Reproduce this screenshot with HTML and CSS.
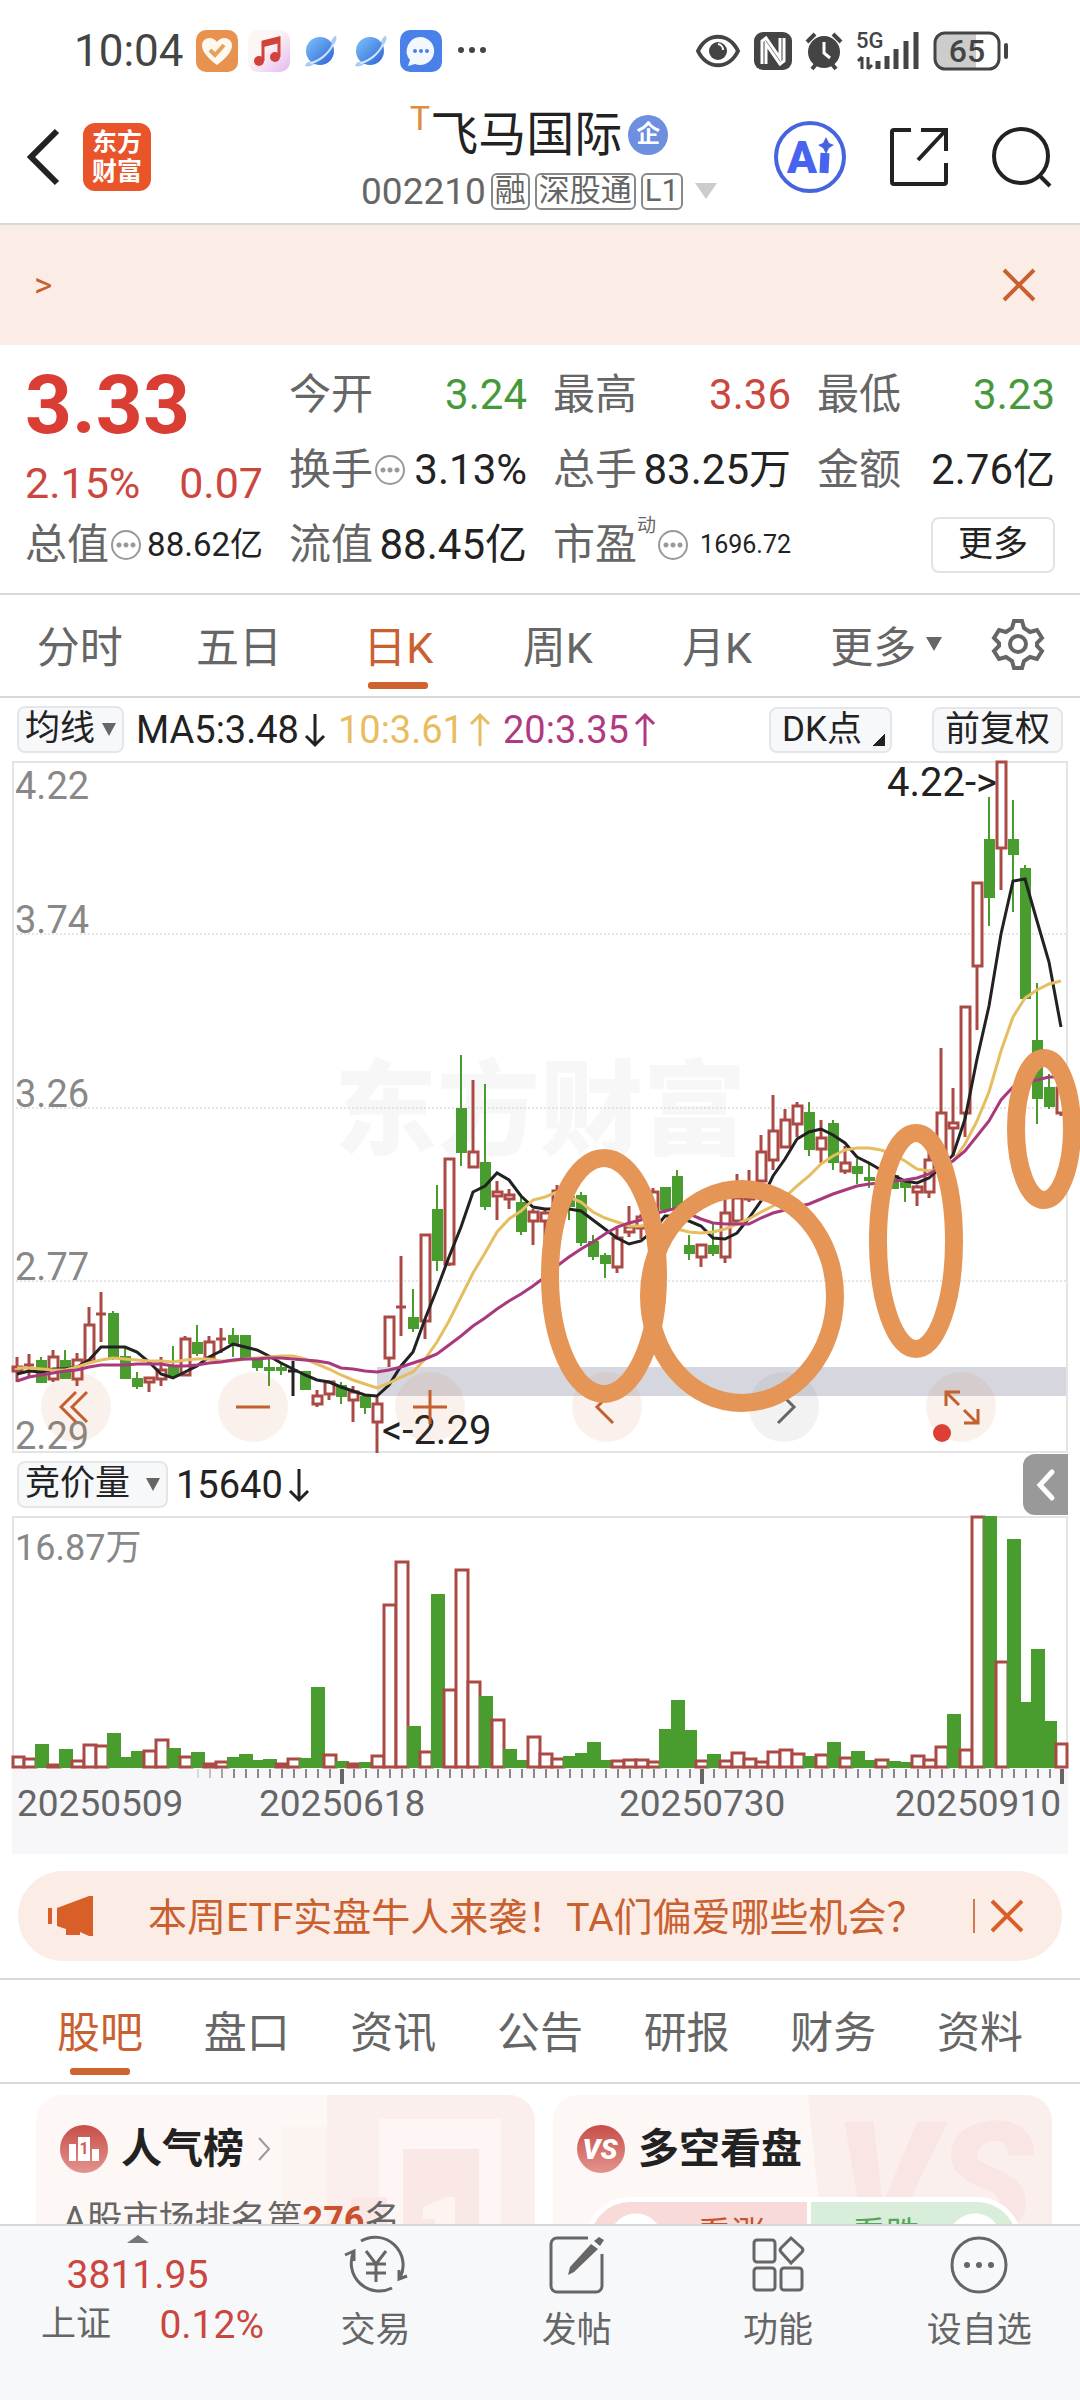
FILE: index.html
```html
<!DOCTYPE html>
<html lang="zh-CN">
<head>
  <meta charset="UTF-8" />
  <meta name="viewport" content="width=device-width, initial-scale=1.0" />
  <title>飞马国际 002210</title>
  <link rel="stylesheet" href="styles.css">
</head>
<body>

  <div class="status-bar">
    <span class="clock">10:04</span>
    <div class="status-apps">
      <svg width="42" height="42" viewBox="0 0 42 42">
        <rect width="42" height="42" rx="10" fill="#e89250"/>
        <path d="M21 35C12 28 6 22 6 15.500C6 8 16 5 21 12C26 5 36 8 36 15.500C36 22 30 28 21 35Z" fill="#fff8ee"/>
        <path d="M14 20l5 5 9-10" fill="none" stroke="#e3a25d" stroke-width="4"/>
      </svg>
      <svg width="42" height="42" viewBox="0 0 42 42">
        <defs>
          <linearGradient id="music" x1="0" y1="0" x2="1" y2="1"><stop offset="0.4" stop-color="#fdf6f4"/><stop offset="1" stop-color="#e5b8f0"/></linearGradient>
          <linearGradient id="planet" x1="0" y1="0" x2="1" y2="1"><stop offset="0" stop-color="#7cc4f7"/><stop offset="1" stop-color="#2f62d8"/></linearGradient>
        </defs>
        <rect width="42" height="42" rx="10" fill="url(#music)"/>
        <path d="M15 31V12l16-4v19" fill="none" stroke="#d2413a" stroke-width="3"/>
        <path d="M15 15l16-4" stroke="#d2413a" stroke-width="4"/>
        <circle cx="11" cy="31" r="5" fill="#d2413a"/><circle cx="27" cy="27" r="5" fill="#d2413a"/>
      </svg>
      <svg width="40" height="42" viewBox="0 0 40 42">
        <path d="M34 7c4 4-22 31-28 27" fill="none" stroke="#a8cdf5" stroke-width="4"/>
        <circle cx="20" cy="21" r="14" fill="url(#planet)"/>
        <path d="M33 14C29 24 18 32 10 33" fill="none" stroke="#d4e6fb" stroke-width="2"/>
      </svg>
      <svg width="40" height="42" viewBox="0 0 40 42">
        <path d="M34 7c4 4-22 31-28 27" fill="none" stroke="#a8cdf5" stroke-width="4"/>
        <circle cx="20" cy="21" r="14" fill="url(#planet)"/>
        <path d="M33 14C29 24 18 32 10 33" fill="none" stroke="#d4e6fb" stroke-width="2"/>
      </svg>
      <svg width="42" height="42" viewBox="0 0 42 42">
        <rect width="42" height="42" rx="10" fill="#4a80ea"/>
        <path d="M21 7a14 14 0 1 1-6 27l-7 2 2-6A14 14 0 0 1 21 7Z" fill="#f3f8ff"/>
        <circle cx="15" cy="21" r="2" fill="#4a80ea"/><circle cx="21" cy="21" r="2" fill="#4a80ea"/><circle cx="27" cy="21" r="2" fill="#4a80ea"/>
      </svg>
      <svg class="more-apps" width="30" height="42" viewBox="0 0 30 42" fill="#444"><circle cx="4" cy="20" r="3"/><circle cx="15" cy="20" r="3"/><circle cx="26" cy="20" r="3"/></svg>
    </div>
    <div class="status-icons">
      <svg width="46" height="38" viewBox="0 0 46 38">
        <path d="M3 19C12 0 34 0 43 19C34 38 12 38 3 19Z" fill="none" stroke="#444" stroke-width="4"/>
        <circle cx="23" cy="19" r="9" fill="#444"/><path d="M23 12a6 6 0 0 1 5 6" fill="none" stroke="#fff" stroke-width="2"/>
      </svg>
      <svg width="38" height="38" viewBox="0 0 38 38">
        <rect width="38" height="38" rx="9" fill="#444"/>
        <path d="M8 32V9l4-3 14 20V6M30 6v23l-4 3L12 12v20" fill="none" stroke="#fff" stroke-width="3"/>
      </svg>
      <svg width="38" height="40" viewBox="0 0 38 40">
        <circle cx="19" cy="21" r="16" fill="#444"/>
        <path d="M2 11l8-8M36 11l-8-8M7 38l5-6M31 38l-5-6" stroke="#444" stroke-width="4"/>
        <path d="M19 11v11l6 5" fill="none" stroke="#fff" stroke-width="3"/>
      </svg>
      <svg width="64" height="40" viewBox="0 0 64 40">
        <text x="0" y="17" class="net">5G</text>
        <path d="M6 26v12M2 30l4-4M12 26v12M16 34l-4 4" stroke="#444" stroke-width="3" fill="none"/>
        <path d="M22 30v8M31 25v13M40 18v20M50 10v28M60 1v37" stroke="#444" stroke-width="5"/>
      </svg>
      <svg width="76" height="40" viewBox="0 0 76 40">
        <path d="M12 2h31v36H12A10 10 0 0 1 2 28V12A10 10 0 0 1 12 2Z" fill="#ccc"/>
        <rect x="2" y="2" width="64" height="36" rx="10" fill="none" stroke="#444" stroke-width="3"/>
        <path d="M73 14v12" stroke="#444" stroke-width="4" stroke-linecap="round"/>
        <text x="34" y="31" text-anchor="middle" class="battery">65</text>
      </svg>
    </div>
  </div>

  <header class="header">
    <div class="header-side">
      <button class="icon-btn" aria-label="返回">
        <svg width="34" height="58" viewBox="0 0 34 58"><path d="M31 3L5 29l26 26" fill="none" stroke="#222" stroke-width="6"/></svg>
      </button>
      <div class="logo"><span>东方</span><span>财富</span></div>
    </div>
    <div class="stock">
      <h1 class="stock-name"><sup>T</sup>飞马国际<span class="badge">企</span></h1>
      <div class="stock-code">
        <span>002210</span><span class="tag">融</span><span class="tag">深股通</span><span class="tag">L1</span>
        <svg width="22" height="16" viewBox="0 0 22 16"><path d="M0 0h22L11 16Z" fill="#ccc"/></svg>
      </div>
    </div>
    <div class="header-side header-actions">
      <button class="icon-btn" aria-label="AI">
        <svg width="72" height="72" viewBox="0 0 72 72">
          <circle cx="36" cy="36" r="34" fill="none" stroke="#4664e0" stroke-width="4"/>
          <text x="13" y="52" class="ai">A</text>
          <path d="M51 32l-1 20" stroke="#4664f0" stroke-width="9"/>
          <path d="M52 16l3 6 5 2-5 3-3 6-3-6-5-3 5-2Z" fill="#4664e0"/>
        </svg>
      </button>
      <button class="icon-btn" aria-label="分享">
        <svg width="60" height="60" viewBox="0 0 60 60" fill="none" stroke="#222" stroke-width="4">
          <path d="M22 3H5a2 2 0 0 0-2 2v50a2 2 0 0 0 2 2h50a2 2 0 0 0 2-2V36M32 3h25v21M57 3L29 33"/>
        </svg>
      </button>
      <button class="icon-btn" aria-label="搜索">
        <svg width="60" height="62" viewBox="0 0 60 62" fill="none" stroke="#222" stroke-width="4"><circle cx="29" cy="30" r="27"/><path d="M47 49l11 11"/></svg>
      </button>
    </div>
  </header>

  <div class="banner">
    <a href="#" class="banner-link">&gt;</a>
    <button class="icon-btn" aria-label="关闭">
      <svg width="34" height="34" viewBox="0 0 34 34"><path d="M2 2l30 30M32 2L2 32" stroke="#c9602f" stroke-width="4"/></svg>
    </button>
  </div>

  <main class="main">
    <section class="quote">
      <div class="price">
        <strong>3.33</strong>
        <div class="change"><span>2.15%</span><span>0.07</span></div>
      </div>
      <div class="cell"><span>今开</span><b class="down">3.24</b></div>
      <div class="cell"><span>最高</span><b class="up">3.36</b></div>
      <div class="cell"><span>最低</span><b class="down">3.23</b></div>
      <div class="cell"><span>换手</span><i class="hint"></i><b>3.13%</b></div>
      <div class="cell"><span>总手</span><b>83.25万</b></div>
      <div class="cell"><span>金额</span><b>2.76亿</b></div>
      <div class="cell"><span>总值</span><i class="hint"></i><b class="small">88.62亿</b></div>
      <div class="cell"><span>流值</span><b>88.45亿</b></div>
      <div class="cell"><span>市盈</span><sup>动</sup><i class="hint"></i><b class="tiny">1696.72</b></div>
      <div class="cell"><button class="more-btn">更多</button></div>
    </section>

    <nav class="period-tabs">
      <button>分时</button>
      <button>五日</button>
      <button class="active">日K</button>
      <button>周K</button>
      <button>月K</button>
      <button class="more-tab">更多<svg width="16" height="14" viewBox="0 0 16 14"><path d="M0 0h16L8 14Z" fill="#666"/></svg></button>
      <button aria-label="设置">
        <svg width="52" height="52" viewBox="0 0 52 52" fill="none" stroke="#666" stroke-width="4">
          <path d="M22 3h8l2 7 6 4 7-2 5 8-5 5v3l5 5-5 8-7-2-6 4-2 7h-8l-2-7-6-4-7 2-5-8 5-5v-3l-5-5 5-8 7 2 6-4Z"/><circle cx="26" cy="26" r="8"/>
        </svg>
      </button>
    </nav>

    <div class="chart-bar">
      <label class="dropdown"><select aria-label="指标"><option>均线</option></select></label>
      <span class="ma ma5">MA5:3.48<svg width="22" height="34" viewBox="0 0 22 34"><path d="M11 1v31M2 23l9 9 9-9"/></svg></span>
      <span class="ma ma10">10:3.61<svg width="22" height="34" viewBox="0 0 22 34"><path d="M11 33V2M2 11l9-9 9 9"/></svg></span>
      <span class="ma ma20">20:3.35<svg width="22" height="34" viewBox="0 0 22 34"><path d="M11 33V2M2 11l9-9 9 9"/></svg></span>
      <div class="chart-tools">
        <button class="chip dk">DK点</button>
        <button class="chip">前复权</button>
      </div>
    </div>

    <div class="chart">
      <svg class="plot" viewBox="0 0 1056 692">
        <text x="322" y="386" class="watermark">东方财富</text>
        <path d="M0 173H1056M0 347H1056M0 520H1056" class="grid"/>
        <rect x="365" y="606" width="690" height="29" fill="#d6d7de"/>
        <rect x="1" y="1" width="1054" height="690" class="frame"/>
        <g class="axis-text">
          <text x="3" y="38">4.22</text>
          <text x="3" y="172">3.74</text>
          <text x="3" y="346">3.26</text>
          <text x="3" y="519">2.77</text>
          <text x="3" y="688">2.29</text>
        </g>
        <g id="candles"></g>
        <g id="averages"></g>
        <text x="985" y="35" text-anchor="end" class="mark">4.22-&gt;</text>
        <text x="370" y="683" class="mark">&lt;-2.29</text>
      </svg>
      <div class="chart-controls">
        <button aria-label="最左"><svg width="70" height="70" viewBox="0 0 70 70"><path d="M35 20L20 35l15 15M46 20L31 35l15 15"/></svg></button>
        <button aria-label="缩小"><svg width="70" height="70" viewBox="0 0 70 70"><path d="M18 35h34"/></svg></button>
        <button aria-label="放大"><svg width="70" height="70" viewBox="0 0 70 70"><path d="M18 35h34M35 18v34"/></svg></button>
        <button aria-label="左移"><svg width="70" height="70" viewBox="0 0 70 70"><path d="M41 19L25 35l16 16"/></svg></button>
        <button aria-label="右移" class="disabled"><svg width="70" height="70" viewBox="0 0 70 70"><path d="M29 19l16 16-16 16"/></svg></button>
        <button aria-label="全屏"><svg width="70" height="70" viewBox="0 0 70 70"><path d="M20 34V20h14M20 20l13 13M52 37v14H38M51 51L38 38"/><circle cx="16" cy="61" r="9" class="dot"/></svg></button>
      </div>
      <svg class="plot circles" viewBox="0 0 1056 692">
        <ellipse cx="592" cy="515" rx="54" ry="118"/>
        <ellipse cx="730" cy="535" rx="93" ry="107"/>
        <ellipse cx="904" cy="480" rx="38" ry="108"/>
        <ellipse cx="1032" cy="368" rx="28" ry="71"/>
      </svg>
    </div>

    <div class="chart-bar volume-bar">
      <label class="dropdown wide"><select aria-label="副图"><option>竞价量</option></select></label>
      <span class="ma ma5">15640<svg width="22" height="34" viewBox="0 0 22 34"><path d="M11 1v31M2 23l9 9 9-9"/></svg></span>
      <button class="drawer" aria-label="展开"><svg width="20" height="32" viewBox="0 0 20 32"><path d="M16 3L4 16l12 13" fill="none" stroke="#fff" stroke-width="5" stroke-linecap="round"/></svg></button>
    </div>

    <div class="chart">
      <svg class="plot" viewBox="0 0 1056 338">
        <path d="M1 252V1h1054v251" class="frame"/>
        <rect y="252" width="1056" height="86" fill="#f7f7fa"/>
        <text x="3" y="44" class="axis-text volume-max">16.87万</text>
        <g id="volumes"></g>
        <g id="ticks"></g>
        <g class="dates">
          <text x="5" y="300">20250509</text>
          <text x="247" y="300">20250618</text>
          <text x="607" y="300">20250730</text>
          <text x="1049" y="300" text-anchor="end">20250910</text>
        </g>
      </svg>
    </div>

    <div class="notice">
      <svg width="46" height="40" viewBox="0 0 46 40" fill="#d95f28"><path d="M0 12h4v16H0ZM9 12L41 0h4v40h-4l-9-4v3H18v-6l-9-3Z"/></svg>
      <a href="#">本周ETF实盘牛人来袭！TA们偏爱哪些机会？</a>
      <button class="icon-btn" aria-label="关闭">
        <svg width="34" height="34" viewBox="0 0 34 34"><path d="M2 2l30 30M32 2L2 32" stroke="#d95f28" stroke-width="4"/></svg>
      </button>
    </div>

    <nav class="info-tabs">
      <button class="active">股吧</button>
      <button>盘口</button>
      <button>资讯</button>
      <button>公告</button>
      <button>研报</button>
      <button>财务</button>
      <button>资料</button>
    </nav>

    <section class="cards">
      <article class="card">
        <svg class="card-art" width="300" height="200" viewBox="0 0 300 200">
          <path d="M92 0h208v200H92Z" fill="#fbefed"/>
          <path d="M46 32h46v168H46Z" fill="#fcf4f1"/>
          <path d="M144 24h122v176H144Z" fill="#fdf6f4"/>
          <path d="M168 54h76v146h-76ZM116 102h36v98h-36Z" fill="#fae8e6"/>
          <path d="M188 112l24-10h8v98h-20v-76h-12Z" fill="#fdf4f2"/>
        </svg>
        <h2>
          <svg width="48" height="48" viewBox="0 0 48 48">
            <defs><linearGradient id="ball" x1="0" y1="0" x2="0" y2="1"><stop offset="0" stop-color="#c74e49"/><stop offset="1" stop-color="#e3948d"/></linearGradient></defs>
            <circle cx="24" cy="24" r="24" fill="url(#ball)"/>
            <path d="M9 19h7v17H9ZM18 12h12v24H18ZM32 24h7v12h-7Z" fill="#fff"/>
            <text x="24" y="29" text-anchor="middle" class="rank-one">1</text>
          </svg>
          人气榜
          <svg width="14" height="24" viewBox="0 0 14 24"><path d="M2 1l10 11L2 23" fill="none" stroke="#999" stroke-width="2"/></svg>
        </h2>
        <p>A股市场排名第<em>276</em>名</p>
      </article>
      <article class="card">
        <svg class="card-art" width="300" height="200" viewBox="0 0 300 200">
          <path d="M56 0h244v200H76Z" fill="#fbefed"/>
          <text x="82" y="140" class="vs-art">VS</text>
        </svg>
        <h2>
          <svg width="48" height="48" viewBox="0 0 48 48"><circle cx="24" cy="24" r="24" fill="url(#ball)"/><text x="23" y="34" text-anchor="middle" class="vs">VS</text></svg>
          多空看盘
        </h2>
        <div class="vote">
          <button class="bull">看涨</button>
          <button class="bear">看跌</button>
        </div>
      </article>
    </section>
  </main>

  <footer class="bottom-nav">
    <a href="#" class="index">
      <svg width="22" height="8" viewBox="0 0 22 8"><path d="M11 0l11 8H0Z" fill="#777"/></svg>
      <span class="up">3811.95</span>
      <span class="index-row"><span>上证</span><span class="up pct">0.12%</span></span>
    </a>
    <a href="#">
      <svg width="66" height="60" viewBox="0 0 66 60" fill="none" stroke="#666" stroke-width="3">
        <path d="M18 6A28 28 0 0 1 57 43M49 53A28 28 0 0 1 11 16M2 20l9-4v10M64 41l-8 3v-9"/>
        <path d="M23 16l10 13 10-13M33 29v18M23 29h20M23 38h20"/>
      </svg>
      交易
    </a>
    <a href="#">
      <svg width="58" height="60" viewBox="0 0 58 60">
        <path d="M40 3H9a6 6 0 0 0-6 6v42a6 6 0 0 0 6 6h39a6 6 0 0 0 6-6V19" fill="none" stroke="#666" stroke-width="3"/>
        <path d="M43 9l7 5-24 23-6 3 2-8ZM46 6l5-4 5 3-4 6Z" fill="#666"/>
      </svg>
      发帖
    </a>
    <a href="#">
      <svg width="56" height="60" viewBox="0 0 56 60" fill="none" stroke="#666" stroke-width="3">
        <rect x="4" y="5" width="21" height="22" rx="3"/><rect x="4" y="33" width="21" height="22" rx="3"/><rect x="31" y="33" width="21" height="22" rx="3"/>
        <path d="M41 3l11 10a3 3 0 0 1 0 4L41 28 31 17a3 3 0 0 1 0-4Z"/>
      </svg>
      功能
    </a>
    <a href="#">
      <svg width="60" height="60" viewBox="0 0 60 60"><circle cx="30" cy="30" r="27" fill="none" stroke="#666" stroke-width="3"/><g fill="#666"><circle cx="18" cy="30" r="3"/><circle cx="30" cy="30" r="3"/><circle cx="42" cy="30" r="3"/></g></svg>
      设自选
    </a>
  </footer>

  <script src="script.js"></script>
</body>
</html>
```

FILE: styles.css
```css
* {
  box-sizing: border-box;
}

body {
  margin: 0;
  height: 100vh;
  display: flex;
  flex-direction: column;
  overflow: hidden;
  background: #fff;
  color: #222;
  font-family: Roboto, "Noto Sans CJK SC", sans-serif;
}

button {
  margin: 0;
  padding: 0;
  border: none;
  background: none;
  color: inherit;
  font-family: inherit;
  cursor: pointer;
}

a {
  color: inherit;
  text-decoration: none;
}

svg {
  display: block;
  flex: none;
  overflow: visible;
}

.icon-btn {
  display: flex;
}

.up {
  color: #cc4640;
}

.down {
  color: #46993a;
}

/* status bar */
.status-bar {
  display: flex;
  align-items: center;
  height: 102px;
  padding: 0 71px 0 74px;
  color: #444;
}

.clock {
  font-size: 44px;
}

.status-apps {
  display: flex;
  align-items: center;
  gap: 10px;
  margin-left: 12px;
}

.more-apps {
  margin-left: 5px;
}

.status-icons {
  display: flex;
  align-items: center;
  gap: 13px;
  margin-left: auto;
}

.net {
  font-size: 22px;
  font-weight: 500;
  fill: #444;
}

.battery {
  font-size: 32px;
  font-weight: 500;
  fill: #444;
}

/* header */
.header {
  display: flex;
  justify-content: space-between;
  height: 123px;
  padding: 0 28px 0 26px;
  border-bottom: 2px solid #d8d8da;
}

.header-side {
  flex: 1;
  display: flex;
  align-items: center;
  gap: 23px;
  height: 110px;
}

.header-actions {
  justify-content: flex-end;
  gap: 43px;
}

.logo {
  display: flex;
  flex-direction: column;
  justify-content: center;
  width: 68px;
  height: 68px;
  border-radius: 12px;
  background: #e9542b;
  color: #fff;
  font-size: 25px;
  font-weight: 700;
  line-height: 29px;
  text-align: center;
}

.stock {
  padding-top: 4px;
}

.stock-name {
  display: flex;
  align-items: center;
  justify-content: center;
  margin: 0;
  font-size: 48px;
  font-weight: 400;
  line-height: 58px;
}

.stock-name sup {
  align-self: flex-start;
  color: #df8a3c;
  font-size: 34px;
  line-height: 24px;
}

.badge {
  width: 40px;
  height: 40px;
  margin-left: 6px;
  border-radius: 50%;
  background: #6e8fe0;
  color: #fff;
  font-size: 24px;
  font-weight: 700;
  line-height: 38px;
  text-align: center;
}

.stock-code {
  display: flex;
  align-items: center;
  gap: 5px;
  height: 54px;
  color: #666;
  font-size: 37px;
}

.tag {
  height: 37px;
  padding: 0 2px;
  border: 2px solid #888;
  border-radius: 6px;
  font-size: 31px;
  line-height: 32px;
}

.stock-code svg {
  margin-left: 7px;
}

.ai {
  font-size: 44px;
  font-weight: 900;
  fill: #4664f0;
}

/* banner */
.banner {
  display: flex;
  align-items: center;
  justify-content: space-between;
  height: 120px;
  padding: 0 44px 0 34px;
  background: #fbede5;
  color: #c9602f;
}

.banner-link {
  font-size: 35px;
}

.main {
  flex: 1;
  min-height: 0;
  overflow: hidden;
}

/* quote */
.quote {
  display: grid;
  grid-template-columns: repeat(4, 1fr);
  grid-auto-rows: 75px;
  column-gap: 26px;
  padding: 12px 25px 11px;
  border-bottom: 2px solid #d8d8da;
}

.price {
  grid-row: span 2;
  color: #d93d33;
}

.price strong {
  display: block;
  font-size: 82px;
  font-weight: 700;
  line-height: 96px;
}

.change {
  display: flex;
  justify-content: space-between;
  color: #cc4640;
  font-size: 43px;
  line-height: 60px;
}

.cell {
  display: flex;
  align-items: center;
  color: #666;
  font-size: 42px;
  line-height: 60px;
  white-space: nowrap;
}

.cell b {
  margin-left: auto;
  color: #222;
  font-weight: 400;
}

.cell b.up {
  color: #cc4640;
}

.cell b.down {
  color: #46993a;
}

.cell b.small {
  font-size: 33px;
}

.cell b.tiny {
  font-size: 25px;
}

.cell sup {
  align-self: flex-start;
  font-size: 19px;
  line-height: 38px;
}

/* circle with three dots */
.hint {
  flex: none;
  width: 30px;
  height: 30px;
  margin-left: 2px;
  border: 2px solid #999;
  border-radius: 50%;
  background:
    radial-gradient(circle at 6px 13px, #999 2px, transparent 3px),
    radial-gradient(circle at 13px 13px, #999 2px, transparent 3px),
    radial-gradient(circle at 20px 13px, #999 2px, transparent 3px);
}

.more-btn {
  width: 124px;
  height: 56px;
  margin-left: auto;
  border: 2px solid #e2e3e8;
  border-radius: 8px;
  color: #222;
  font-size: 35px;
  line-height: 50px;
}

/* tabs */
.period-tabs,
.info-tabs {
  border-bottom: 2px solid #d8d8da;
}

.period-tabs {
  display: grid;
  grid-template-columns: repeat(6, 1fr) 124px;
  height: 103px;
}

.info-tabs {
  display: flex;
  justify-content: space-between;
  height: 106px;
  padding: 0 57px;
  border-top: 2px solid #d8d8da;
}

.period-tabs button,
.info-tabs button {
  display: flex;
  align-items: center;
  justify-content: center;
  position: relative;
  height: 100%;
  padding-bottom: 4px;
  color: #666;
  font-size: 43px;
}

.period-tabs .more-tab {
  gap: 10px;
  padding-left: 20px;
}

.period-tabs .active,
.info-tabs .active {
  color: #c9602f;
}

.period-tabs .active::after,
.info-tabs .active::after {
  content: "";
  position: absolute;
  bottom: 7px;
  left: 50%;
  width: 60px;
  height: 7px;
  margin-left: -30px;
  border-radius: 3px;
  background: #cf6330;
}

/* chart */
.chart-bar {
  display: flex;
  align-items: center;
  gap: 12px;
  height: 63px;
  margin: 0 12px;
  padding: 0 5px;
}

.dropdown {
  position: relative;
}

.dropdown select {
  display: block;
  width: 107px;
  height: 47px;
  padding: 0 6px 3px;
  appearance: none;
  border: 2px solid #e4e6ea;
  border-radius: 8px;
  background: #f7f8fa;
  color: #222;
  font-family: inherit;
  font-size: 35px;
}

.dropdown.wide select {
  width: 151px;
}

.dropdown::after {
  content: "";
  position: absolute;
  top: 17px;
  right: 8px;
  border: 7px solid transparent;
  border-top: 13px solid #666;
  border-bottom: none;
  pointer-events: none;
}

.ma {
  display: flex;
  align-items: center;
  gap: 5px;
  font-size: 38px;
}

.ma svg {
  fill: none;
  stroke: currentColor;
  stroke-width: 3;
}

.ma10 {
  color: #e8bd5f;
}

.ma20 {
  color: #b03a80;
}

.chart-tools {
  display: flex;
  gap: 40px;
  margin-left: auto;
}

.chip {
  height: 46px;
  padding: 0 11px;
  border: 2px solid #e4e6ea;
  border-radius: 8px;
  background: #f7f8fa;
  font-size: 35px;
  line-height: 38px;
}

.chip.dk {
  padding-right: 28px;
  background: linear-gradient(135deg, transparent 50%, #222 50%) right 5px bottom 5px / 12px 12px no-repeat #f7f8fa;
}

.volume-bar {
  gap: 8px;
  padding-right: 0;
}

.drawer {
  display: flex;
  align-items: center;
  justify-content: center;
  width: 45px;
  height: 61px;
  margin-left: auto;
  border-radius: 12px 0 0 12px;
  background: #999;
}

.chart {
  position: relative;
  margin: 0 12px;
}

.plot {
  width: 100%;
  height: auto;
}

.circles {
  position: absolute;
  top: 0;
  left: 0;
  pointer-events: none;
  fill: none;
  stroke: #e59556;
  stroke-width: 18;
}

.frame {
  fill: none;
  stroke: #e4e4e4;
  stroke-width: 2;
}

.grid {
  stroke: #ccc;
  stroke-width: 1;
  stroke-dasharray: 2 2;
}

.watermark {
  fill: #f7f7f7;
  font-size: 103px;
  font-weight: 900;
}

.axis-text {
  fill: #888;
  font-size: 38px;
}

.volume-max {
  font-size: 36px;
}

.mark {
  fill: #222;
  font-size: 40px;
}

.dates {
  fill: #666;
  font-size: 37px;
}

.rise {
  fill: #fff;
  stroke: #ab4a44;
  stroke-width: 3;
}

.fall {
  fill: #489d2e;
  stroke: #489d2e;
  stroke-width: 2;
}

.flat {
  stroke: #222;
  stroke-width: 3;
}

.line {
  fill: none;
  stroke-width: 3;
}

.tick {
  stroke: #888;
  stroke-width: 2;
}

.tick.major {
  stroke: #666;
  stroke-width: 4;
}

.chart-controls {
  position: absolute;
  right: 72px;
  bottom: 11px;
  left: 29px;
  display: flex;
  justify-content: space-between;
}

.chart-controls button {
  border-radius: 50%;
  background: rgba(207, 99, 48, 0.09);
}

.chart-controls button.disabled {
  background: rgba(90, 90, 90, 0.08);
}

.chart-controls svg {
  fill: none;
  stroke: #c3602f;
  stroke-width: 3;
}

.chart-controls .disabled svg {
  stroke: #666;
}

.chart-controls .dot {
  fill: #dc4034;
  stroke: none;
}

/* notice */
.notice {
  display: flex;
  align-items: center;
  height: 90px;
  margin: 17px 18px;
  padding: 0 38px 0 30px;
  border-radius: 45px;
  background: #fbede5;
  color: #c9602f;
}

.notice a {
  margin-left: 54px;
  padding-bottom: 4px;
  font-size: 39px;
  white-space: nowrap;
}

.notice button {
  margin-left: auto;
  padding-left: 15px;
  border-left: 2px solid #cf7a50;
}

/* cards */
.cards {
  display: grid;
  grid-template-columns: 1fr 1fr;
  gap: 18px;
  padding: 11px 28px 0 36px;
}

.card {
  position: relative;
  height: 200px;
  padding: 24px;
  overflow: hidden;
  border-radius: 26px;
  background: #fdf7f5;
}

.card-art {
  position: absolute;
  top: 0;
  right: 0;
}

.card h2 {
  position: relative;
  display: flex;
  align-items: center;
  gap: 13px;
  margin: 0;
  font-size: 41px;
  font-weight: 700;
  line-height: 60px;
}

.card p {
  position: relative;
  margin: 16px 0 0;
  padding-left: 3px;
  color: #666;
  font-size: 36px;
  line-height: 50px;
}

.card em {
  color: #c9512e;
  font-style: normal;
  font-weight: 700;
}

.rank-one {
  fill: #d0605a;
  font-size: 16px;
  font-weight: 700;
}

.vs {
  fill: #fff;
  font-size: 28px;
  font-weight: 900;
  font-style: italic;
}

.vs-art {
  fill: #f9e6e4;
  font-size: 160px;
  font-weight: 900;
  font-style: italic;
}

.vote {
  position: relative;
  display: flex;
  gap: 4px;
  margin: 18px 6px 0 8px;
  border: 5px solid #fff;
  border-radius: 46px;
  background: #fff;
}

.vote button {
  flex: 1;
  height: 80px;
  padding-bottom: 16px;
  font-size: 34px;
  line-height: 44px;
}

.vote .bull {
  padding-left: 66px;
  border-radius: 40px 0 0 40px;
  background: radial-gradient(circle at 46px 38px, #fff 26px, transparent 27px) #f8dad8;
  color: #c9512e;
}

.vote .bear {
  padding-right: 56px;
  border-radius: 0 40px 40px 0;
  background: radial-gradient(circle at 164px 38px, #fff 26px, transparent 27px) #d9eddb;
  color: #57a55c;
}

/* bottom nav */
.bottom-nav {
  display: grid;
  grid-template-columns: 275px repeat(4, 1fr);
  height: 176px;
  border-top: 2px solid #d8d8da;
  background: #f7f8fa;
  color: #666;
  font-size: 35px;
}

.bottom-nav a {
  display: flex;
  flex-direction: column;
  align-items: center;
  padding-top: 9px;
  line-height: 50px;
}

.bottom-nav a svg {
  margin-bottom: 11px;
}

.bottom-nav .index {
  font-size: 39px;
}

.bottom-nav .index svg {
  margin-bottom: 7px;
}

.index-row {
  display: flex;
  align-self: stretch;
  justify-content: space-between;
  padding: 0 11px 0 41px;
  font-size: 35px;
}

.index-row .pct {
  font-size: 39px;
}
```

FILE: script.js
```js
const NS = "http://www.w3.org/2000/svg";
const STEP = 12;

// [type, high, body top, body bottom, low], r = rise, g = fall, k = flat
const candles = [
  ["r",596,606,610,621],["r",593,604,604,615],["g",596,600,621,621],["r",589,596,618,621],
  ["g",589,600,617,617],["r",592,599,618,625],["r",546,564,600,602],["r",531,553,553,581],
  ["g",550,553,597,599],["g",586,596,617,617],["g",611,618,625,628],["r",616,617,621,631],
  ["r",596,609,618,625],["g",585,605,615,615],["r",575,578,614,615],["g",564,582,592,595],
  ["r",575,581,597,598],["r",567,578,578,592],["g",567,575,582,596],["g",574,575,597,597],
  ["g",596,598,606,610],["g",598,607,609,625],["g",601,607,609,614],["k",600,610,610,635],
  ["g",610,611,628,628],["r",629,635,643,646],["r",620,621,633,639],["g",621,625,635,643],
  ["r",625,631,639,661],["g",635,636,646,653],["r",636,643,661,692],["r",556,556,597,606],
  ["r",495,546,546,575],["g",528,557,567,571],["r",474,474,560,578],["g",424,449,499,510],
  ["r",398,398,503,505],["g",294,348,391,405],["r",319,391,406,406],["g",323,402,445,449],
  ["r",420,431,435,459],["r",428,434,438,448],["g",436,442,470,474],["r",448,451,460,484],
  ["r",449,452,460,485],["r",424,430,450,470],["g",430,436,445,459],["g",431,435,481,485],
  ["g",474,481,495,499],["g",492,495,502,517],["r",467,477,506,512],["r",445,466,471,476],
  ["r",453,456,467,478],["r",427,431,460,470],["g",427,427,448,452],["g",409,416,448,472],
  ["g",474,485,492,499],["r",484,484,496,506],["g",463,485,492,495],["r",438,452,496,502],
  ["r",413,437,460,462],["r",409,425,438,441],["r",374,391,420,424],["r",334,370,399,409],
  ["r",348,359,386,387],["r",341,345,363,376],["g",341,352,388,395],["r",359,377,388,402],
  ["g",359,363,401,409],["r",385,402,410,413],["g",398,406,412,423],["g",403,417,419,427],
  ["g",412,418,428,432],["g",410,415,427,427],["g",420,421,426,441],["r",424,426,431,445],
  ["r",390,399,431,437],["r",287,352,398,400],["r",327,362,367,395],["r",246,246,352,376],
  ["r",122,122,205,269],["g",36,79,136,165],["r",1,1,87,129],["g",39,79,93,151],
  ["g",104,108,237,237],["g",222,280,337,363],["g",313,327,345,348],["r",326,327,352,355]
];

const ma5 = [613,610,611,608,608,606,599,586,586,586,591,601,613,617,611,605,596,590,583,586,589,595,
  602,608,614,619,621,626,630,634,635,624,605,591,558,528,496,466,431,425,412,419,435,446,448,448,448,
  450,459,468,477,483,480,470,455,455,460,465,477,478,472,457,440,415,398,378,371,368,374,382,396,402,
  409,414,420,422,417,406,394,358,298,245,173,120,118,160,201,266];

const ma10 = [607,607,608,609,609,606,602,599,597,598,599,600,600,601,599,598,598,600,600,598,597,596,
  595,595,598,603,608,614,619,623,627,622,616,611,598,581,560,536,512,492,471,458,450,439,436,431,436,
  441,451,457,461,465,465,463,465,468,471,472,471,468,463,458,451,445,436,425,415,403,395,389,387,387,
  389,393,400,408,410,408,400,383,360,331,290,256,237,229,223,220];

const ma20 = [620,616,614,612,610,609,606,604,604,604,603,603,603,605,605,604,602,601,599,598,598,597,
  597,598,599,600,602,607,608,610,611,609,606,602,598,593,584,575,565,557,548,540,533,525,516,505,496,
  488,481,473,466,462,459,453,450,447,453,458,462,463,463,463,457,452,449,446,443,438,433,429,425,423,
  422,420,419,417,413,406,400,390,375,360,339,326,321,319,316,316];

// the sign gives the colour: positive = red, negative = green
const volumes = [10,8,-22,2,-17,6,22,21,-33,-9,-15,16,27,-18,10,-14,3,5,-9,-12,-6,-7,3,8,-8,-79,12,-5,3,
  -4,11,162,205,-40,15,-172,77,197,85,-70,47,-17,-6,30,13,8,-10,-13,-24,-6,6,7,7,5,-37,-66,-36,6,-12,6,
  14,8,5,15,17,13,-10,12,-24,9,-15,-6,7,-5,-4,11,7,20,-52,17,250,-250,105,-227,-64,-117,-45,23];

function draw(parent, tag, attrs) {
  const el = document.createElementNS(NS, tag);
  for (const key in attrs) el.setAttribute(key, attrs[key]);
  document.getElementById(parent).appendChild(el);
}

function centre(i) {
  return 5 + i * STEP;
}

candles.forEach(([type, high, top, bottom, low], i) => {
  const x = centre(i);
  const cls = { r: "rise", g: "fall", k: "flat" }[type];
  draw("candles", "path", { d: `M${x} ${high}V${low}`, class: cls });
  if (top === bottom) {
    draw("candles", "path", { d: `M${x - 5} ${top}h10`, class: cls });
  } else {
    const left = Math.max(x - 4, 1);
    draw("candles", "rect", { x: left, y: top, width: x + 5 - left, height: bottom - top, class: cls });
  }
});

[[ma5, "#222"], [ma10, "#e5be62"], [ma20, "#a9397c"]].forEach(([values, color]) => {
  const points = values.map((y, i) => `${centre(i)},${y}`).join(" ");
  draw("averages", "polyline", { points: points, stroke: color, class: "line" });
});

volumes.forEach((v, i) => {
  const x = Math.max(centre(i) - 5, 1);
  const right = Math.min(centre(i) + 7, 1055);
  const h = Math.abs(v);
  draw("volumes", "rect", { x: x, y: 251 - h, width: right - x, height: h, class: v > 0 ? "rise" : "fall" });
});

for (let i = 15; i < volumes.length; i++) {
  const major = i % 30 === 27;
  draw("ticks", "path", {
    d: `M${centre(i) + 1} 253v${major ? 15 : 9}`,
    class: major ? "tick major" : "tick",
    opacity: Math.min(1, (i - 14) * 0.25)
  });
}
```
